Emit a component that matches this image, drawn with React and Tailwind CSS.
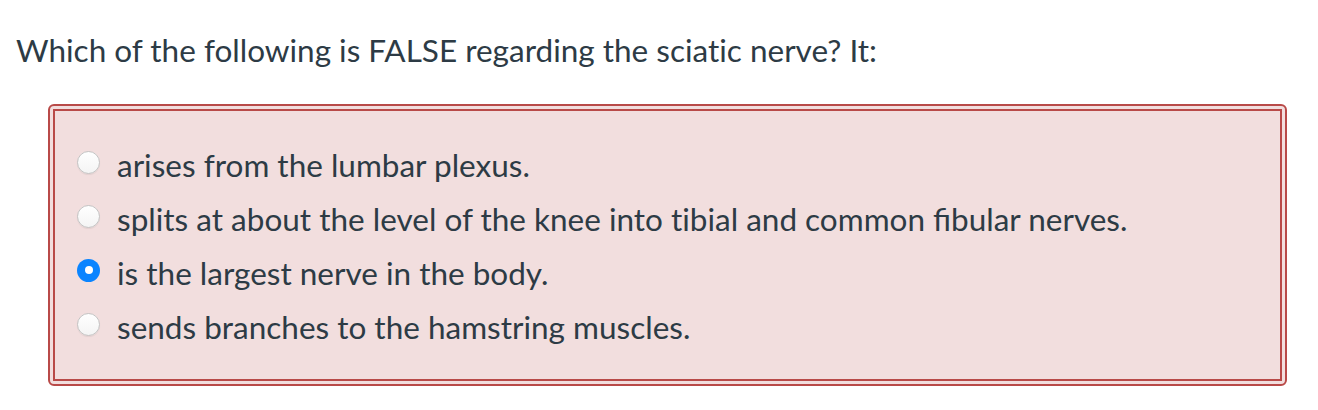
export default function App() {
  const Z = "\u200C";
  const answers = [
    { text: "arises from the lumbar plexus.", checked: false },
    { text: `splits at about the level of the knee into t${Z}ibial and common fibular nerves.`, checked: false },
    { text: "is the largest nerve in the body.", checked: true },
    { text: "sends branches to the hamstring muscles.", checked: false },
  ];
  return (
    <div className="w-[1318px] h-[410px] bg-white text-[#2d3b45]" style={{ fontFamily: "Lato, 'Noto Sans', sans-serif" }}>
      <div className="pl-[16px] pt-[30px] text-[31.5px] leading-[40px]">
        {`Which of the following is FALSE regarding the sciat${Z}ic nerve? It:`}
      </div>
      <div className="ml-[48px] mt-[34px] w-[1239px] h-[282px] rounded-[6px] border-2 border-[#b94a48] bg-[#f2dede] p-[3px]">
        <div className="h-full border-2 border-[#b94a48] pl-[22px] pt-[24px]">
          {answers.map((a, i) => (
            <div key={i} className="flex items-center h-[54px]">
              {a.checked ? (
                <div className="w-[23px] h-[23px] shrink-0 rounded-full bg-[#0a84ff] flex items-center justify-center">
                  <div className="w-[8px] h-[8px] rounded-full bg-white" />
                </div>
              ) : (
                <div className="w-[23px] h-[23px] shrink-0 rounded-full bg-gradient-to-b from-white to-[#f4f4f4] border border-[#c4c4c4] shadow-[0_1px_1px_rgba(0,0,0,0.06)]" />
              )}
              <span className="ml-[17px] pt-[6px] text-[31.5px] leading-[36px]">{a.text}</span>
            </div>
          ))}
        </div>
      </div>
    </div>
  );
}
